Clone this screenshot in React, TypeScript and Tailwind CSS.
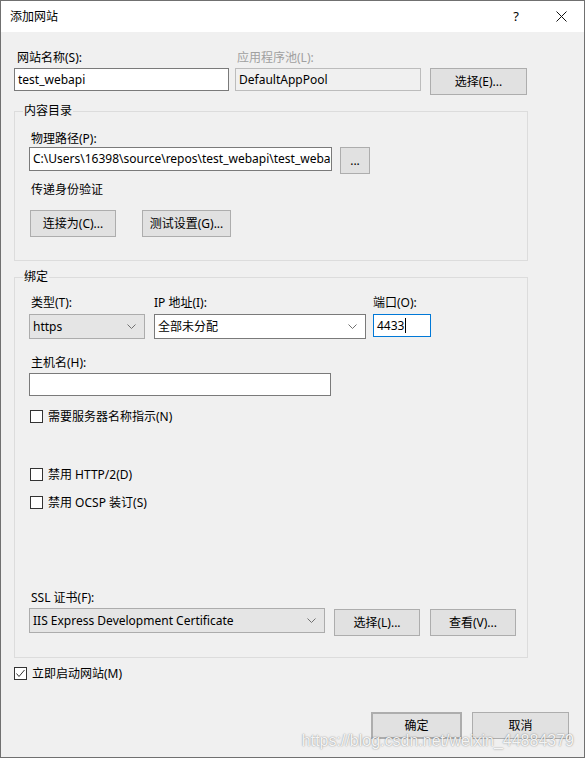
import type { ReactNode } from 'react';

const Label = ({ children, className = '' }: { children: ReactNode; className?: string }) => (
  <div className={`h-4 whitespace-nowrap text-[12px] leading-[19px] ${className}`}>{children}</div>
);

const Button = ({ children, className = '' }: { children: ReactNode; className?: string }) => (
  <div
    className={`flex h-[27px] items-center justify-center border border-[#adadad] bg-[#e1e1e1] text-[12px] ${className}`}
  >
    {children}
  </div>
);

const TextBox = ({ children, className = '' }: { children?: ReactNode; className?: string }) => (
  <div className={`flex h-[23px] items-center overflow-hidden whitespace-nowrap border px-[3px] text-[12px] ${className}`}>
    {children}
  </div>
);

const Chevron = () => (
  <svg width="9" height="5" viewBox="0 0 9 5">
    <polyline points="0.5,0.5 4.5,4.5 8.5,0.5" fill="none" stroke="#707070" strokeWidth="1" />
  </svg>
);

const Combo = ({ value, editable = false, className = '' }: { value: string; editable?: boolean; className?: string }) => (
  <div
    className={`flex h-[25px] items-center justify-between border pl-[3px] pr-[8px] text-[12px] ${
      editable ? 'border-[#7a7a7a] bg-white' : 'border-[#acacac] bg-[#e5e5e5]'
    } ${className}`}
  >
    <span className="whitespace-nowrap">{value}</span>
    <Chevron />
  </div>
);

const CheckBox = ({ label, checked = false, className = '' }: { label: string; checked?: boolean; className?: string }) => (
  <div className={`flex h-4 items-center ${className}`}>
    <div className="flex h-[13px] w-[13px] items-center justify-center border border-[#333333] bg-white">
      {checked && (
        <svg width="11" height="11" viewBox="0 0 11 11">
          <polyline points="1.5,5.5 4,8.5 9.5,2" fill="none" stroke="#333333" strokeWidth="1" />
        </svg>
      )}
    </div>
    <span className="ml-[5px] whitespace-nowrap text-[12px] leading-[19px]">{label}</span>
  </div>
);

export default function App() {
  return (
    <div className="relative flex h-[758px] w-[585px] flex-col border border-[#707070] bg-[#f0f0f0] font-['Noto_Sans','Noto_Sans_CJK_SC',sans-serif] text-black">
      {/* title bar */}
      <div className="flex h-[31px] items-center bg-white">
        <span className="pl-[9px] text-[12px]">添加网站</span>
        <div className="ml-auto flex h-full items-center">
          <span className="w-[44px] text-center text-[13px]">?</span>
          <div className="flex w-[46px] justify-center">
            <svg width="11" height="11" viewBox="0 0 11 11">
              <path d="M0.5 0.5 L10.5 10.5 M10.5 0.5 L0.5 10.5" stroke="#111" strokeWidth="1" />
            </svg>
          </div>
        </div>
      </div>

      {/* site name / app pool */}
      <div className="mt-[16px] flex pl-[13px]">
        <div className="w-[215px]">
          <Label className="pl-[3px]">网站名称(S):</Label>
          <TextBox className="mt-[4px] border-[#7a7a7a] bg-white">test_webapi</TextBox>
        </div>
        <div className="ml-[6px] w-[186px]">
          <Label className="pl-[2px] text-[#a0a0a0]">应用程序池(L):</Label>
          <TextBox className="mt-[4px] border-[#bcbcbc] bg-[#f0f0f0]">DefaultAppPool</TextBox>
        </div>
        <Button className="ml-[9px] mt-[20px] w-[97px]">选择(E)...</Button>
      </div>

      {/* content directory */}
      <fieldset className="ml-[13px] mt-[8px] w-[514px] border border-[#dcdcdc]">
        <legend className="ml-[8px] px-[1px] text-[12px] leading-4">内容目录</legend>
        <div className="pb-[23px] pl-[14px] pt-[10px]">
          <Label className="pl-[2px]">物理路径(P):</Label>
          <div className="mt-[2px] flex items-start">
            <TextBox className="h-[24px] w-[303px] border-[#7a7a7a] bg-white">
              C:\Users\16398\source\repos\test_webapi\test_webapi
            </TextBox>
            <Button className="ml-[8px] w-[30px]">...</Button>
          </div>
          <Label className="mt-[6px] pl-[2px]">传递身份验证</Label>
          <div className="mt-[14px] flex">
            <Button className="ml-[1px] w-[86px]">连接为(C)...</Button>
            <Button className="ml-[26px] w-[89px]">测试设置(G)...</Button>
          </div>
        </div>
      </fieldset>

      {/* binding */}
      <fieldset className="ml-[13px] mt-[8px] w-[514px] border border-[#dcdcdc]">
        <legend className="ml-[8px] px-[1px] text-[12px] leading-4">绑定</legend>
        <div className="pb-[21px] pl-[14px] pt-[8px]">
          <div className="flex">
            <div className="w-[116px]">
              <Label className="pl-[2px]">类型(T):</Label>
              <Combo className="mt-[5px]" value="https" />
            </div>
            <div className="ml-[9px] w-[212px]">
              <Label>IP 地址(I):</Label>
              <Combo className="mt-[5px]" value="全部未分配" editable />
            </div>
            <div className="ml-[7px] w-[58px]">
              <Label>端口(O):</Label>
              <TextBox className="mt-[5px] border-[#0078d7] bg-white">
                4433
                <span className="ml-px h-[15px] w-px bg-black" />
              </TextBox>
            </div>
          </div>
          <Label className="mt-[14px] pl-[2px]">主机名(H):</Label>
          <TextBox className="mt-[4px] w-[302px] border-[#7a7a7a] bg-white" />
          <CheckBox className="ml-[1px] mt-[12px]" label="需要服务器名称指示(N)" />
          <CheckBox className="ml-[1px] mt-[42px]" label="禁用 HTTP/2(D)" />
          <CheckBox className="ml-[1px] mt-[12px]" label="禁用 OCSP 装订(S)" />
          <Label className="mt-[78px] pl-[2px]">SSL 证书(F):</Label>
          <div className="mt-[4px] flex items-start">
            <Combo className="w-[296px]" value="IIS Express Development Certificate" />
            <Button className="ml-[9px] mt-[1px] w-[86px]">选择(L)...</Button>
            <Button className="ml-[10px] mt-[1px] w-[86px]">查看(V)...</Button>
          </div>
        </div>
      </fieldset>

      <CheckBox className="ml-[13px] mt-[7px]" label="立即启动网站(M)" checked />

      <div className="mt-[31px] flex justify-end pr-[15px]">
        <Button className="w-[91px] border-2 border-[#0078d7]">确定</Button>
        <Button className="ml-[10px] w-[97px]">取消</Button>
      </div>

      <span className="absolute bottom-[9px] right-[10px] font-['Liberation_Sans',sans-serif] text-[16px] leading-[15px] text-white/90 [text-shadow:0_0_1.5px_rgba(0,0,0,0.55)]">
        https://blog.csdn.net/weixin_44884379
      </span>
    </div>
  );
}
